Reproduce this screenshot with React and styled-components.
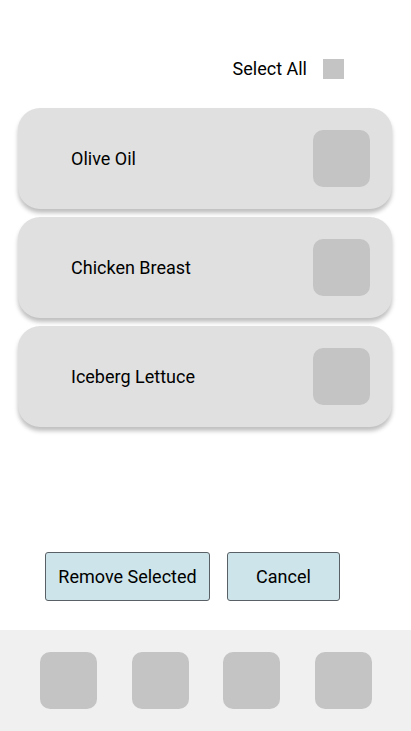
import React from "react";
import styled, { createGlobalStyle } from "styled-components";

const Global = createGlobalStyle`
  html, body { margin: 0; padding: 0; background: #fff; }
  body { font-family: Roboto, "Noto Sans", sans-serif; color: #000; }
`;

const Screen = styled.div`
  display: flex;
  flex-direction: column;
  height: 731px;
  width: 411px;
  overflow: hidden;
`;

const Header = styled.div`
  display: flex;
  justify-content: flex-end;
  align-items: center;
  gap: 16px;
  padding: 59px 67px 0 0;
  margin-bottom: 29px;
`;

const Label = styled.span`
  font-size: 18px;
  line-height: 20px;
`;

const SmallBox = styled.div`
  width: 21px;
  height: 20px;
  background: #c4c4c4;
`;

const List = styled.div`
  display: flex;
  flex-direction: column;
  gap: 8px;
  padding: 0 19px 0 18px;
`;

const Card = styled.div`
  display: flex;
  align-items: center;
  justify-content: space-between;
  height: 101px;
  padding: 0 22px 0 53px;
  background: #e0e0e0;
  border-radius: 22px;
  box-shadow: 0 4px 4px rgba(0, 0, 0, 0.25);
`;

const Square = styled.div`
  width: 57px;
  height: 57px;
  border-radius: 10px;
  background: #c4c4c4;
`;

const Spacer = styled.div`
  flex: 1;
`;

const Actions = styled.div`
  display: flex;
  gap: 17px;
  padding-left: 45px;
  margin-bottom: 29px;
`;

const Button = styled.button`
  width: ${(p) => p.$w}px;
  height: 49px;
  background: #cde4ea;
  border: 1px solid #5a6166;
  border-radius: 3px;
  font-family: Roboto, "Noto Sans", sans-serif;
  font-size: 18px;
  color: #000;
  padding: 0;
`;

const Footer = styled.div`
  display: flex;
  justify-content: space-between;
  align-items: center;
  height: 101px;
  padding: 0 39px 0 40px;
  background: #f0f0f0;
`;

const items = ["Olive Oil", "Chicken Breast", "Iceberg Lettuce"];

export default function App() {
  return (
    <>
      <Global />
      <Screen>
        <Header>
          <Label>Select All</Label>
          <SmallBox />
        </Header>
        <List>
          {items.map((t) => (
            <Card key={t}>
              <Label>{t}</Label>
              <Square />
            </Card>
          ))}
        </List>
        <Spacer />
        <Actions>
          <Button $w={165}>Remove Selected</Button>
          <Button $w={113}>Cancel</Button>
        </Actions>
        <Footer>
          <Square />
          <Square />
          <Square />
          <Square />
        </Footer>
      </Screen>
    </>
  );
}
